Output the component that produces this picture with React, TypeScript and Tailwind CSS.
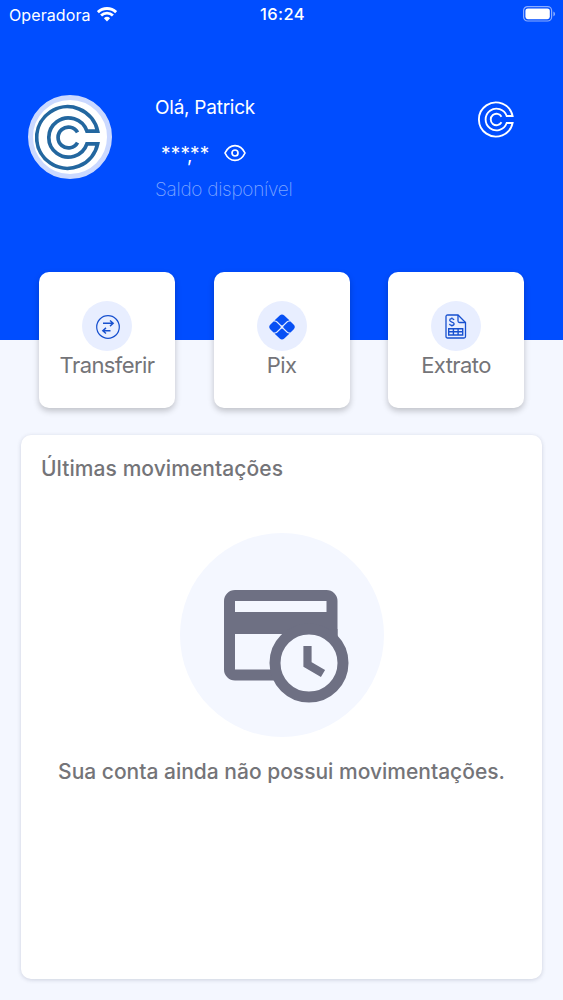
import type { ReactNode } from 'react';

function BrandMark({ className, strokeWidth }: { className: string; strokeWidth: number }) {
  return (
    <svg viewBox="-100 -100 200 200" className={className} fill="none" stroke="currentColor" strokeWidth={strokeWidth}>
      <path d="M87-19A92 92 0 1 0 87 19H55A58.5 58.5 0 1 1 55-19Z" />
      <path d="M27-15A31 31 0 1 0 27 15" />
    </svg>
  );
}

function WifiIcon() {
  return (
    <svg viewBox="0 0 20 15" className="ml-[6px] h-[15px] w-5" fill="none" stroke="white" strokeWidth="2.8">
      <path d="M.9 5.2a13 13 0 0 1 18.2 0" />
      <path d="M4.1 8.6a8.4 8.4 0 0 1 11.8 0" />
      <path d="M6.9 11.2a4.6 4.6 0 0 1 6.2 0L10 14.6Z" fill="white" stroke="none" />
    </svg>
  );
}

function BatteryIcon() {
  return (
    <svg viewBox="0 0 34 16" className="mb-px h-4 w-[34px]">
      <rect x="1.6" y=".6" width="28" height="14.4" rx="4" fill="none" stroke="#8badff" strokeWidth="1.2" />
      <rect x="3.4" y="2.4" width="24.4" height="10.8" rx="2.4" fill="white" />
      <path d="M31.4 5.4c2.2.8 2.2 4 0 4.8Z" fill="#8badff" />
    </svg>
  );
}

function EyeIcon() {
  return (
    <svg viewBox="0 0 22 18" className="mb-[2px] h-[18px] w-[22px]" fill="none" stroke="white" strokeWidth="1.7">
      <path d="M1 9C3.3 4.2 6.8 1.6 11 1.6S18.7 4.2 21 9C18.7 13.8 15.2 16.4 11 16.4S3.3 13.8 1 9Z" strokeLinejoin="round" />
      <circle cx="11" cy="9" r="3" />
    </svg>
  );
}

function TransferIcon() {
  return (
    <svg viewBox="0 0 24 24" className="mt-[2px] ml-px size-6" fill="none" stroke="#1750cf" strokeWidth="1.2">
      <circle cx="12" cy="12" r="11.3" />
      <path d="M7 8.3H16.700M14 5.500l3.200 2.800-3.200 2.800M14.500 15.700H7.300M10 12.900l-3.200 2.800 3.200 2.800" strokeWidth="1.4" />
    </svg>
  );
}

function PixIcon() {
  return (
    <svg viewBox="0 0 26 26" className="mt-[2px] ml-px size-[26px]">
      <path
        fill="#0850f4"
        d="M5.4 6.5 10.700 1.500Q13-.3 15.300 1.500L20.600 6.500Q18.700 6.600 17.600 7.600L14 11.100Q13 12 12 11.100L8.400 7.600Q7.300 6.600 5.400 6.500ZM5.400 19.500 10.700 24.500Q13 26.300 15.300 24.500L20.600 19.500Q18.700 19.400 17.600 18.400L14 14.900Q13 14 12 14.900L8.400 18.400Q7.300 19.400 5.400 19.500ZM4.500 7.500H5.700Q6.900 7.600 7.700 8.400L11.300 11.900Q12.200 13 11.300 14.100L7.700 17.600Q6.900 18.400 5.700 18.500H4.500L1.200 15.200Q-.8 13 1.200 10.800ZM21.500 7.500H20.300Q19.100 7.600 18.300 8.400L14.700 11.900Q13.800 13 14.700 14.100L18.300 17.600Q19.100 18.400 20.300 18.500H21.500L24.800 15.200Q26.800 13 24.800 10.800Z"
      />
    </svg>
  );
}

function StatementIcon() {
  return (
    <svg viewBox="0 0 22 25" className="mt-px h-[25px] w-[22px]" fill="none" stroke="#1750cf" strokeWidth="1.3">
      <path d="M2.700 1H13l7.500 7.500V22.500Q20.500 24 19 24H2.700Q1 24 1 22.500V2.500Q1 1 2.700 1Z" />
      <path d="M13 1V7Q13 8.500 14.500 8.500H20.500" />
      <path d="M9 6C8.300 4.200 4.700 4.100 4.700 6.300c0 2.200 4.400 1.200 4.400 3.500 0 2.300-4.100 2.200-4.700.1M6.900 3.500v1.200M6.900 11.400v1.200" />
      <path d="M3.700 14.700h14v6.300h-14ZM3.700 17.800h14M8.400 14.700V21M13.100 14.700V21" strokeWidth="1.4" />
    </svg>
  );
}

function PendingCardIcon() {
  return (
    <svg viewBox="0 0 125 115" className="mt-[22px] ml-[10px] h-[115px] w-[125px]">
      <rect x="5.500" y="6.500" width="102.500" height="79.500" rx="5.500" fill="none" stroke="#6e7083" strokeWidth="11" />
      <path d="M6 23h102v22H6Z" fill="#6e7083" />
      <path d="M102 40h11.500v12H102Z" fill="#6e7083" />
      <circle cx="85" cy="74" r="34" fill="#f4f7ff" stroke="#6e7083" strokeWidth="11" />
      <path d="M83.500 57V75.500L99 84.500" fill="none" stroke="#6e7083" strokeWidth="8.2" />
    </svg>
  );
}

function ActionCard({ label, children }: { label: string; children: ReactNode }) {
  return (
    <button className="flex size-[136px] flex-col items-center rounded-[10px] bg-white pt-[29px] shadow-[0_3px_6px_rgba(0,0,0,0.22)]">
      <span className="flex size-[50px] items-center justify-center rounded-full bg-[#e8eeff]">{children}</span>
      <span className="text-[22px] leading-[28px] tracking-[-0.6px] text-[#747478]">{label}</span>
    </button>
  );
}

export default function App() {
  return (
    <main className="flex h-[1000px] w-[563px] flex-col overflow-hidden bg-[#f4f7ff] font-['Inter',sans-serif]">
      <header className="h-[340px] shrink-0 bg-[#004dff] text-white">
        <div className="grid h-[29px] grid-cols-3 items-center pr-[7px] pl-[9px]">
          <div className="flex items-center text-[16px] tracking-[0.1px]">
            Operadora
            <WifiIcon />
          </div>
          <div className="text-center text-[16.5px] font-medium tracking-[0.4px]">16:24</div>
          <div className="flex justify-end">
            <BatteryIcon />
          </div>
        </div>
        <div className="flex items-start pt-[66px] pl-7">
          <div className="flex size-[84px] shrink-0 items-center justify-center rounded-full border-[5px] border-[#cbd9ff] bg-white text-[#23679f]">
            <BrandMark className="mt-px mr-[3px] size-[67px]" strokeWidth={11} />
          </div>
          <div className="ml-[43px] w-[323px]">
            <p className="mt-px text-[19px] leading-6 tracking-[-0.25px]">Olá, Patrick</p>
            <div className="mt-[22px] flex h-6 items-center">
              <span className="ml-[6px] flex h-6 w-[63px] text-[19px] leading-6">
                <span className="w-[29px] tracking-[0.2px]">***</span>
                <span className="-ml-[3px] w-[3px] pt-[2px]">,</span>
                <span className="tracking-[0.2px]">**</span>
              </span>
              <EyeIcon />
            </div>
            <p className="mt-3 text-[19px] leading-6 font-extralight tracking-[-0.3px] text-[#7ea5ff]">Saldo disponível</p>
          </div>
          <BrandMark className="mt-[6px] size-[37px]" strokeWidth={10} />
        </div>
      </header>
      <nav className="-mt-[68px] flex shrink-0 justify-between pr-[39px] pl-[39px]">
        <ActionCard label="Transferir"><TransferIcon /></ActionCard>
        <ActionCard label="Pix"><PixIcon /></ActionCard>
        <ActionCard label="Extrato"><StatementIcon /></ActionCard>
      </nav>
      <section className="mt-[27px] ml-[21px] flex h-[544px] w-[521px] shrink-0 flex-col items-center rounded-[10px] bg-white shadow-[0_1px_4px_rgba(50,60,90,0.2)]">
        <h2 className="mt-5 w-full pl-5 text-[21px] leading-7 font-medium tracking-[0.07px] text-[#747478]">Últimas movimentações</h2>
        <div className="mt-[50px] flex size-[204px] items-center justify-center rounded-full bg-[#f4f7ff]">
          <PendingCardIcon />
        </div>
        <p className="mt-[21px] text-[21px] leading-7 font-medium whitespace-nowrap text-[#747478]">
          Sua conta ainda não possui movimentações.
        </p>
      </section>
    </main>
  );
}
